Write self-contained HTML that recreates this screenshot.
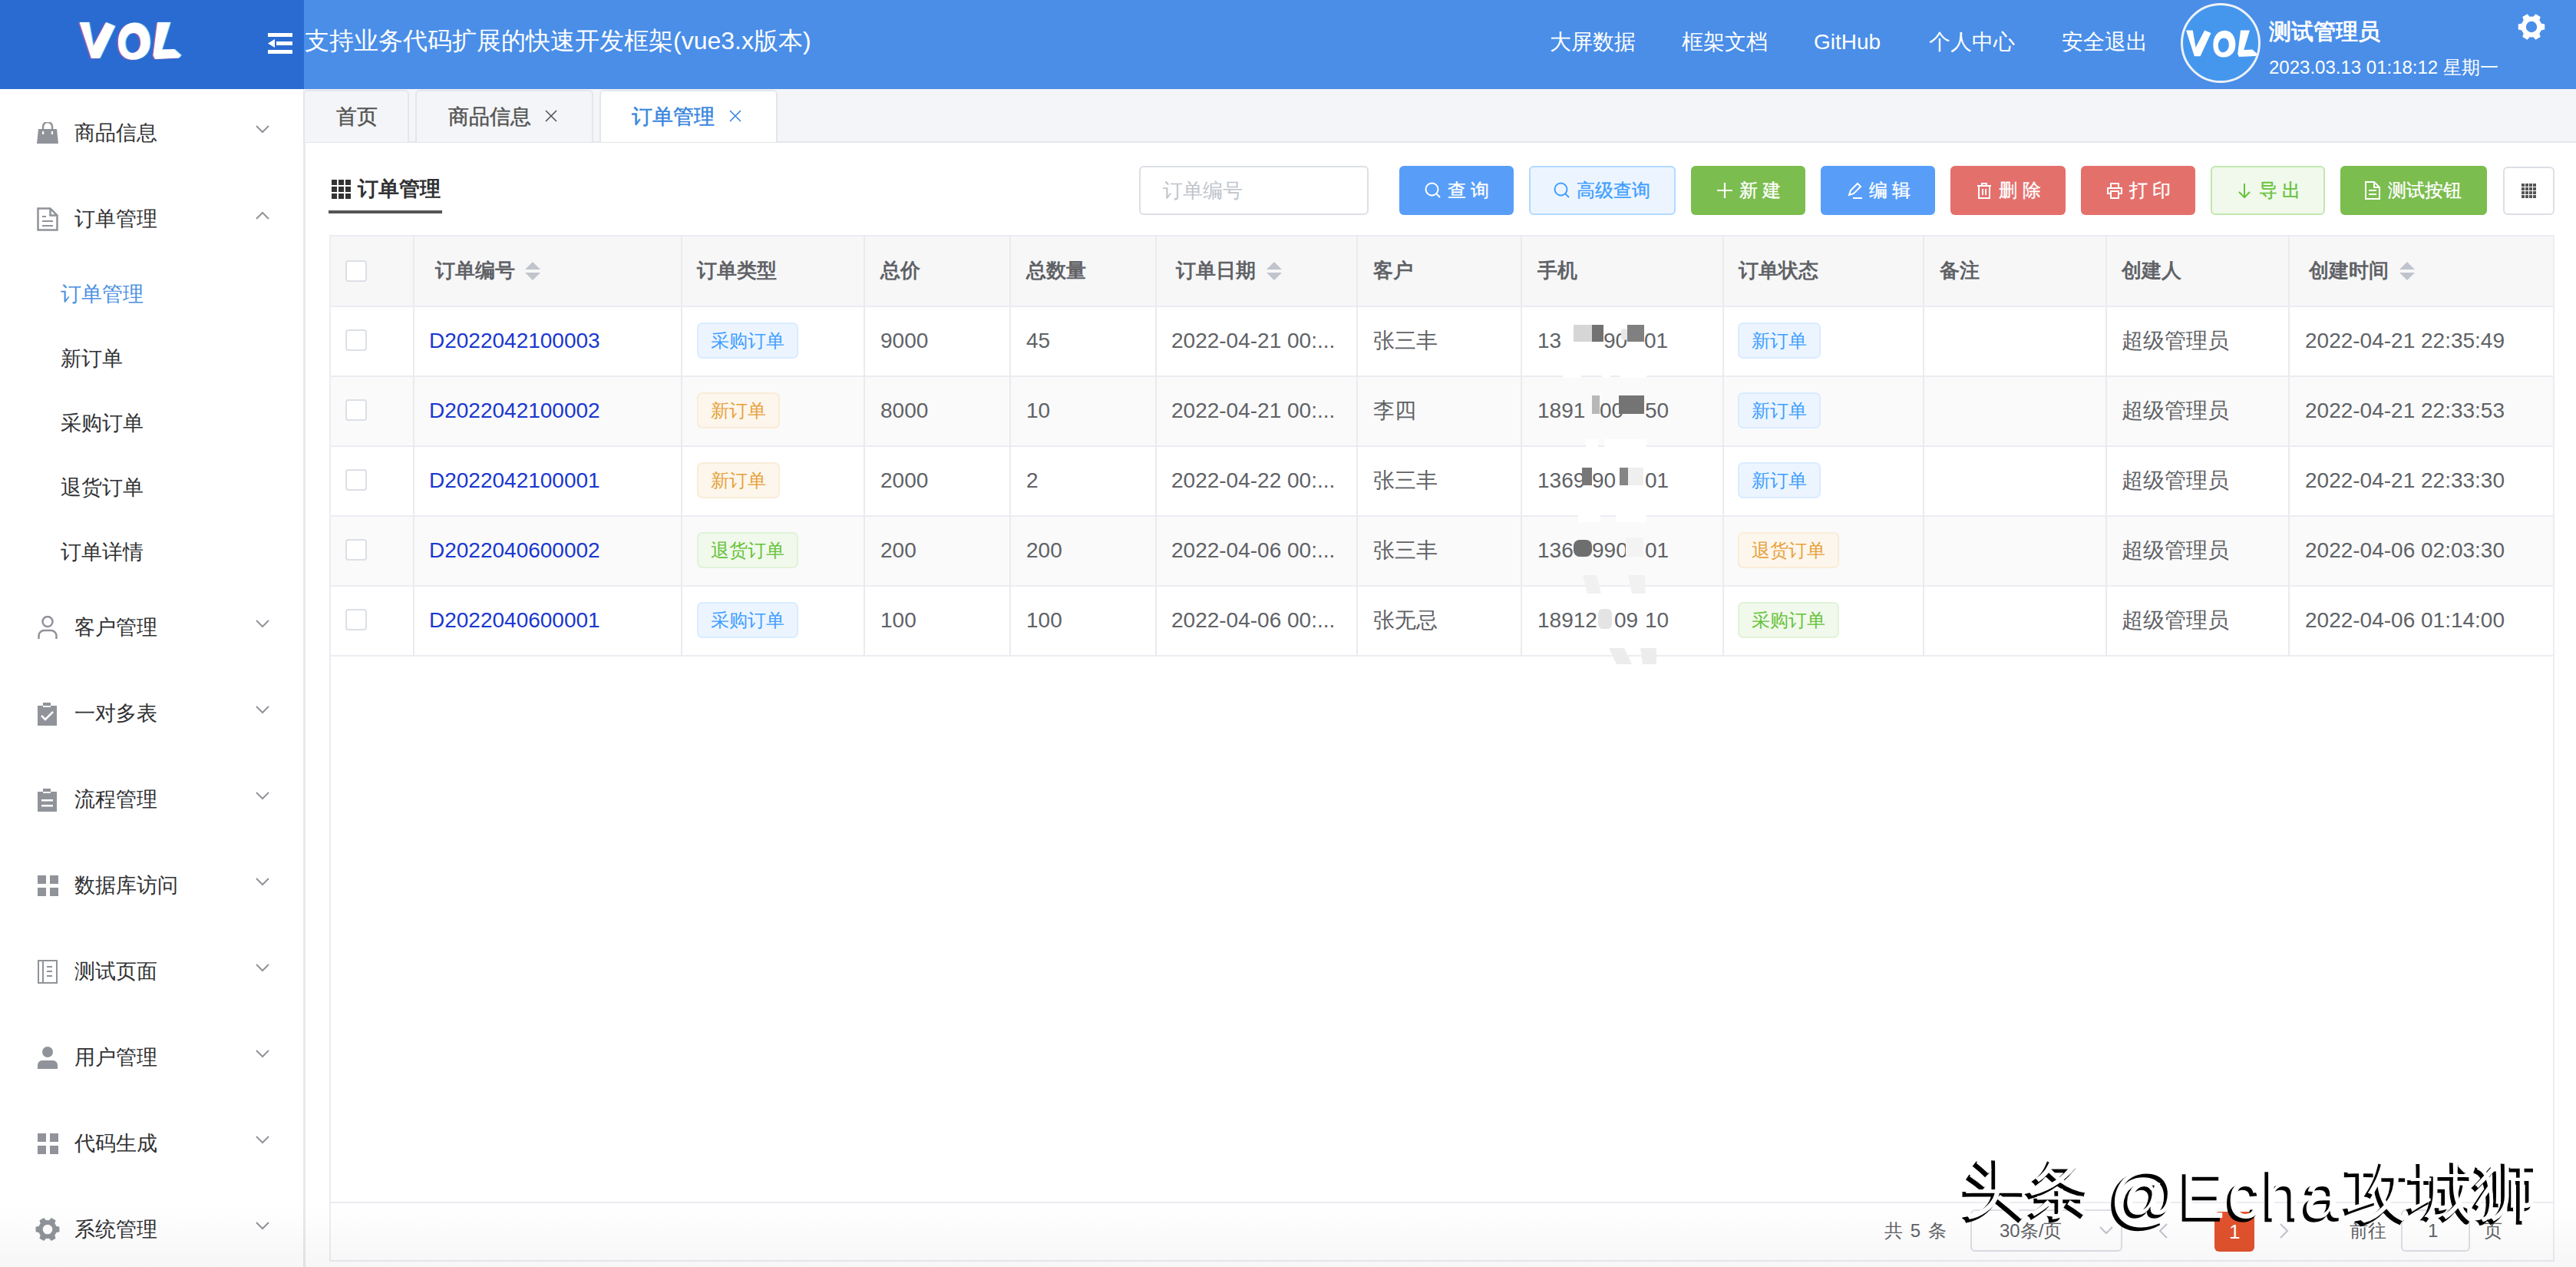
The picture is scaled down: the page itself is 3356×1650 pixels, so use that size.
<!DOCTYPE html><html><head><meta charset="utf-8"><style>
*{box-sizing:border-box;margin:0;padding:0}
html,body{width:3356px;height:1650px;overflow:hidden;background:#fff;font-family:"Liberation Sans",sans-serif;}
.a{position:absolute}
.t{position:absolute;white-space:nowrap;line-height:1}
#logo{left:0;top:0;width:396px;height:116px;background:#2a6bd1}
#hdr{left:396px;top:0;width:2960px;height:116px;background:#4a8ee8}
.nav{color:#fff;font-size:28px}
#side{left:0;top:116px;width:398px;height:1534px;background:#fff;border-right:3px solid #e9e9ea}
.mi{font-size:27px;color:#303133}
.chev{position:absolute;left:333px;width:18px;height:11px}
#tabs{left:396px;top:116px;width:2960px;height:70px;background:#f4f5f8;border-bottom:2px solid #e4e6eb}
.tab{position:absolute;top:117px;height:68px;background:#f4f5f8;border:2px solid #e4e6eb;border-bottom:none;border-radius:6px 6px 0 0}
.tabt{font-size:27px;color:#555;-webkit-text-stroke:0.5px #555}
.btn{position:absolute;top:216px;height:64px;border-radius:6px;color:#fff;font-size:24px}
.btn .t{top:20px}
.col{position:absolute;top:307px;width:2px;height:1258px;background:#ebedf2}
.th{font-size:26px;color:#606266;font-weight:bold}
.td{font-size:28px;color:#606266}
.cb{position:absolute;left:450px;width:28px;height:28px;border:2px solid #dcdfe6;border-radius:4px;background:#fff}
.tag{position:absolute;height:47px;border:2px solid;border-radius:7px;font-size:24px;line-height:43px;padding:0 16px;white-space:nowrap}
.tb{background:#ecf5ff;border-color:#d9ecff;color:#409eff}
.to{background:#fdf6ec;border-color:#faecd8;color:#e6a23c}
.tg{background:#f0f9eb;border-color:#e1f3d8;color:#67c23a}
.link{color:#1a37d0}
</style></head><body>
<div id="logo" class="a"></div>
<div id="hdr" class="a"></div>
<svg class="a" style="left:0px;top:0px" width="396" height="116" viewBox="0 0 396 116"><g transform="translate(-1.5,0.5)"><path fill="rgba(255,90,140,.55)" d="M103.5 29L116 29L121.5 60L138 29L150 34L130 76L119 76Z"/><path fill="rgba(255,90,140,.55)" fill-rule="evenodd" d="M175 29.5C188 29 196 41 195.5 56C195 70 186 78 173 77.8C160 77.5 153.5 68 154 54C154.5 40 162 30 175 29.5ZM174 43C167 43 163 50 163.3 57C163.5 64 167 69.5 173 69C179.5 68.5 183.5 62 183.2 55C183 48 180 43 174 43Z"/><path fill="rgba(255,90,140,.55)" d="M205 29L222 29L211 64.5L227 64L236 72L233 75.5L202 77L199.5 72Z"/></g><g transform="translate(1.2,-0.3)"><path fill="rgba(160,255,255,.5)" d="M103.5 29L116 29L121.5 60L138 29L150 34L130 76L119 76Z"/><path fill="rgba(160,255,255,.5)" fill-rule="evenodd" d="M175 29.5C188 29 196 41 195.5 56C195 70 186 78 173 77.8C160 77.5 153.5 68 154 54C154.5 40 162 30 175 29.5ZM174 43C167 43 163 50 163.3 57C163.5 64 167 69.5 173 69C179.5 68.5 183.5 62 183.2 55C183 48 180 43 174 43Z"/><path fill="rgba(160,255,255,.5)" d="M205 29L222 29L211 64.5L227 64L236 72L233 75.5L202 77L199.5 72Z"/></g><path fill="#fff" d="M103.5 29L116 29L121.5 60L138 29L150 34L130 76L119 76Z"/><path fill="#fff" fill-rule="evenodd" d="M175 29.5C188 29 196 41 195.5 56C195 70 186 78 173 77.8C160 77.5 153.5 68 154 54C154.5 40 162 30 175 29.5ZM174 43C167 43 163 50 163.3 57C163.5 64 167 69.5 173 69C179.5 68.5 183.5 62 183.2 55C183 48 180 43 174 43Z"/><path fill="#fff" d="M205 29L222 29L211 64.5L227 64L236 72L233 75.5L202 77L199.5 72Z"/></svg>
<svg class="a" style="left:349px;top:43px" width="32" height="27" viewBox="0 0 32 27"><rect x="0" y="0" width="32" height="5" fill="#fff"/><rect x="11" y="11" width="21" height="5" fill="#fff"/><polygon points="0,13.5 9,8 9,19" fill="#fff"/><rect x="0" y="22" width="32" height="5" fill="#fff"/></svg>
<div class="t " style="left:397px;top:37px;font-size:32px;color:#fff">支持业务代码扩展的快速开发框架(vue3.x版本)</div>
<div class="t nav" style="left:2019px;top:41px;">大屏数据</div>
<div class="t nav" style="left:2191px;top:41px;">框架文档</div>
<div class="t nav" style="left:2363px;top:41px;">GitHub</div>
<div class="t nav" style="left:2513px;top:41px;">个人中心</div>
<div class="t nav" style="left:2686px;top:41px;">安全退出</div>
<div class="a" style="left:2841px;top:4px;width:104px;height:104px;border-radius:50%;border:3px solid #eef2f8;background:#4597ee"></div>
<svg class="a" style="left:2830px;top:0px" width="130" height="116" viewBox="0 0 130 116"><g transform="translate(-54.45,18.52) scale(0.70,0.72)"><path fill="#fff" d="M103.5 29L116 29L121.5 60L138 29L150 34L130 76L119 76Z"/><path fill="#fff" fill-rule="evenodd" d="M175 29.5C188 29 196 41 195.5 56C195 70 186 78 173 77.8C160 77.5 153.5 68 154 54C154.5 40 162 30 175 29.5ZM174 43C167 43 163 50 163.3 57C163.5 64 167 69.5 173 69C179.5 68.5 183.5 62 183.2 55C183 48 180 43 174 43Z"/><path fill="#fff" d="M205 29L222 29L211 64.5L227 64L236 72L233 75.5L202 77L199.5 72Z"/></g></svg>
<div class="t " style="left:2956px;top:27px;font-size:29px;font-weight:bold;color:#fff">测试管理员</div>
<div class="t " style="left:2956px;top:76px;font-size:24px;color:#fff">2023.03.13 01:18:12 星期一</div>
<svg class="a" style="left:3280px;top:17px" width="36" height="36" viewBox="0 0 36 36"><path fill="#fff" fill-rule="evenodd" d="M30.59 13.40L35.23 14.40L35.23 21.60L30.59 22.60L30.30 23.32L29.97 24.02L29.60 24.70L29.20 25.36L28.76 25.99L28.28 26.60L29.73 31.12L23.50 34.72L20.31 31.20L19.54 31.31L18.77 31.38L18.00 31.40L17.23 31.38L16.46 31.31L15.69 31.20L12.50 34.72L6.27 31.12L7.72 26.60L7.24 25.99L6.80 25.36L6.40 24.70L6.03 24.02L5.70 23.32L5.41 22.60L0.77 21.60L0.77 14.40L5.41 13.40L5.70 12.68L6.03 11.98L6.40 11.30L6.80 10.64L7.24 10.01L7.72 9.40L6.27 4.88L12.50 1.28L15.69 4.80L16.46 4.69L17.23 4.62L18.00 4.60L18.77 4.62L19.54 4.69L20.31 4.80L23.50 1.28L29.73 4.88L28.28 9.40L28.76 10.01L29.20 10.64L29.60 11.30L29.97 11.98L30.30 12.68ZM25.20 18.00A7.2 7.2 0 1 0 10.80 18.00A7.2 7.2 0 1 0 25.20 18.00Z"/></svg>
<div id="side" class="a"></div>
<svg class="a" style="left:48px;top:159px" width="28" height="28" viewBox="0 0 28 28"><path d="M8 9V6a6 6 0 0 1 12 0v3" fill="none" stroke="#909399" stroke-width="2.5"/><path d="M2 9h24l2 19H0z" fill="#909399"/><rect x="7" y="12" width="2.2" height="4" fill="#fff"/><rect x="18.8" y="12" width="2.2" height="4" fill="#fff"/></svg>
<div class="t mi" style="left:97px;top:160px;">商品信息</div>
<svg class="a" style="left:333px;top:163px" width="18" height="11" viewBox="0 0 18 11"><polyline points="1,1 9,9 17,1" fill="none" stroke="#909399" stroke-width="2"/></svg>
<svg class="a" style="left:48px;top:270px" width="28" height="31" viewBox="0 0 28 31"><path d="M1.5 1.5h16l9 9v19h-25z" fill="none" stroke="#909399" stroke-width="2.5"/><path d="M17.5 1.5v9h9" fill="none" stroke="#909399" stroke-width="2.5"/><rect x="7" y="11" width="5" height="2" fill="#909399"/><rect x="7" y="17" width="14" height="2" fill="#909399"/><rect x="7" y="23" width="14" height="2" fill="#909399"/></svg>
<div class="t mi" style="left:97px;top:272px;">订单管理</div>
<svg class="a" style="left:333px;top:275px" width="18" height="11" viewBox="0 0 18 11"><polyline points="1,10 9,2 17,10" fill="none" stroke="#909399" stroke-width="2"/></svg>
<svg class="a" style="left:49px;top:802px" width="27" height="31" viewBox="0 0 27 31"><circle cx="13" cy="7.5" r="6.5" fill="none" stroke="#909399" stroke-width="2.5"/><path d="M1.5 30v-4a7 7 0 0 1 7-7h9a7 7 0 0 1 7 7v4" fill="none" stroke="#909399" stroke-width="2.5"/></svg>
<div class="t mi" style="left:97px;top:804px;">客户管理</div>
<svg class="a" style="left:333px;top:807px" width="18" height="11" viewBox="0 0 18 11"><polyline points="1,1 9,9 17,1" fill="none" stroke="#909399" stroke-width="2"/></svg>
<svg class="a" style="left:49px;top:915px" width="25" height="30" viewBox="0 0 25 30"><path d="M0 4h7v-4h10v4h8v26H0z" fill="#909399"/><rect x="7" y="4" width="10" height="2" fill="#fff"/><polyline points="5,17 10,22 20,12" fill="none" stroke="#fff" stroke-width="2.5"/></svg>
<div class="t mi" style="left:97px;top:916px;">一对多表</div>
<svg class="a" style="left:333px;top:919px" width="18" height="11" viewBox="0 0 18 11"><polyline points="1,1 9,9 17,1" fill="none" stroke="#909399" stroke-width="2"/></svg>
<svg class="a" style="left:49px;top:1027px" width="25" height="30" viewBox="0 0 25 30"><path d="M0 4h7v-4h10v4h8v26H0z" fill="#909399"/><rect x="7" y="4" width="10" height="2" fill="#fff"/><rect x="5" y="14" width="15" height="2.5" fill="#fff"/><rect x="5" y="21" width="15" height="2.5" fill="#fff"/></svg>
<div class="t mi" style="left:97px;top:1028px;">流程管理</div>
<svg class="a" style="left:333px;top:1031px" width="18" height="11" viewBox="0 0 18 11"><polyline points="1,1 9,9 17,1" fill="none" stroke="#909399" stroke-width="2"/></svg>
<svg class="a" style="left:49px;top:1140px" width="27" height="27" viewBox="0 0 27 27"><rect x="0" y="0" width="11" height="11" fill="#909399"/><rect x="16" y="0" width="11" height="11" fill="#909399"/><rect x="0" y="16" width="11" height="11" fill="#909399"/><rect x="16" y="16" width="11" height="11" fill="#909399"/></svg>
<div class="t mi" style="left:97px;top:1140px;">数据库访问</div>
<svg class="a" style="left:333px;top:1143px" width="18" height="11" viewBox="0 0 18 11"><polyline points="1,1 9,9 17,1" fill="none" stroke="#909399" stroke-width="2"/></svg>
<svg class="a" style="left:49px;top:1250px" width="26" height="31" viewBox="0 0 26 31"><rect x="1" y="1" width="24" height="29" fill="none" stroke="#909399" stroke-width="2"/><rect x="6" y="1" width="2" height="29" fill="#909399"/><rect x="12" y="8" width="7" height="2" fill="#909399"/><rect x="12" y="14" width="7" height="2" fill="#909399"/><rect x="12" y="20" width="7" height="2" fill="#909399"/></svg>
<div class="t mi" style="left:97px;top:1252px;">测试页面</div>
<svg class="a" style="left:333px;top:1255px" width="18" height="11" viewBox="0 0 18 11"><polyline points="1,1 9,9 17,1" fill="none" stroke="#909399" stroke-width="2"/></svg>
<svg class="a" style="left:49px;top:1363px" width="26" height="29" viewBox="0 0 26 29"><circle cx="13" cy="7" r="7" fill="#909399"/><path d="M0 29v-5a6 6 0 0 1 6-6h14a6 6 0 0 1 6 6v5z" fill="#909399"/></svg>
<div class="t mi" style="left:97px;top:1364px;">用户管理</div>
<svg class="a" style="left:333px;top:1367px" width="18" height="11" viewBox="0 0 18 11"><polyline points="1,1 9,9 17,1" fill="none" stroke="#909399" stroke-width="2"/></svg>
<svg class="a" style="left:49px;top:1476px" width="27" height="27" viewBox="0 0 27 27"><rect x="0" y="0" width="11" height="11" fill="#909399"/><rect x="16" y="0" width="11" height="11" fill="#909399"/><rect x="0" y="16" width="11" height="11" fill="#909399"/><rect x="16" y="16" width="11" height="11" fill="#909399"/></svg>
<div class="t mi" style="left:97px;top:1476px;">代码生成</div>
<svg class="a" style="left:333px;top:1479px" width="18" height="11" viewBox="0 0 18 11"><polyline points="1,1 9,9 17,1" fill="none" stroke="#909399" stroke-width="2"/></svg>
<svg class="a" style="left:46px;top:1586px" width="32" height="30" viewBox="0 0 32 30"><path fill="#909399" fill-rule="evenodd" d="M27.20 10.70L31.45 11.70L31.45 18.30L27.20 19.30L26.96 19.88L26.69 20.45L26.39 21.00L26.06 21.54L25.71 22.05L25.33 22.55L26.58 26.73L20.87 30.03L17.88 26.85L17.25 26.93L16.63 26.98L16.00 27.00L15.37 26.98L14.75 26.93L14.12 26.85L11.13 30.03L5.42 26.73L6.67 22.55L6.29 22.05L5.94 21.54L5.61 21.00L5.31 20.45L5.04 19.88L4.80 19.30L0.55 18.30L0.55 11.70L4.80 10.70L5.04 10.12L5.31 9.55L5.61 9.00L5.94 8.46L6.29 7.95L6.67 7.45L5.42 3.27L11.13 -0.03L14.12 3.15L14.75 3.07L15.37 3.02L16.00 3.00L16.63 3.02L17.25 3.07L17.88 3.15L20.87 -0.03L26.58 3.27L25.33 7.45L25.71 7.95L26.06 8.46L26.39 9.00L26.69 9.55L26.96 10.12ZM22.30 15.00A6.3 6.3 0 1 0 9.70 15.00A6.3 6.3 0 1 0 22.30 15.00Z"/></svg>
<div class="t mi" style="left:97px;top:1588px;">系统管理</div>
<svg class="a" style="left:333px;top:1591px" width="18" height="11" viewBox="0 0 18 11"><polyline points="1,1 9,9 17,1" fill="none" stroke="#909399" stroke-width="2"/></svg>
<div class="t mi" style="left:79px;top:370px;color:#4a90e2">订单管理</div>
<div class="t mi" style="left:79px;top:454px;">新订单</div>
<div class="t mi" style="left:79px;top:538px;">采购订单</div>
<div class="t mi" style="left:79px;top:622px;">退货订单</div>
<div class="t mi" style="left:79px;top:706px;">订单详情</div>
<div id="tabs" class="a"></div>
<div class="tab" style="left:395px;width:138px"></div>
<div class="t tabt" style="left:438px;top:139px;">首页</div>
<div class="tab" style="left:541px;width:232px"></div>
<div class="t tabt" style="left:584px;top:139px;">商品信息</div>
<svg class="a" style="left:710px;top:143px" width="16" height="16" viewBox="0 0 16 16"><path d="M1 1L15 15M15 1L1 15" stroke="#555" stroke-width="1.6"/></svg>
<div class="tab" style="left:781px;width:232px;background:#fff"></div>
<div class="t tabt" style="left:823px;top:139px;color:#3a86de;-webkit-text-stroke:0.5px #3a86de">订单管理</div>
<svg class="a" style="left:950px;top:143px" width="16" height="16" viewBox="0 0 16 16"><path d="M1 1L15 15M15 1L1 15" stroke="#3a86de" stroke-width="1.6"/></svg>
<svg class="a" style="left:432px;top:234px" width="25" height="25" viewBox="0 0 25 25"><rect x="0" y="0" width="7" height="7" fill="#333"/><rect x="9" y="0" width="7" height="7" fill="#333"/><rect x="18" y="0" width="7" height="7" fill="#333"/><rect x="0" y="9" width="7" height="7" fill="#333"/><rect x="9" y="9" width="7" height="7" fill="#333"/><rect x="18" y="9" width="7" height="7" fill="#333"/><rect x="0" y="18" width="7" height="7" fill="#333"/><rect x="9" y="18" width="7" height="7" fill="#333"/><rect x="18" y="18" width="7" height="7" fill="#333"/></svg>
<div class="t " style="left:466px;top:233px;font-size:27px;font-weight:bold;color:#303133">订单管理</div>
<div class="a" style="left:428px;top:274px;width:148px;height:4px;background:#555"></div>
<div class="a" style="left:1484px;top:216px;width:299px;height:64px;border:2px solid #dcdfe6;border-radius:6px;background:#fff"></div>
<div class="t " style="left:1515px;top:235px;font-size:26px;color:#c0c4cc">订单编号</div>
<div class="btn" style="left:1823px;width:149px;background:#589ef8;color:#fff;"></div>
<svg class="a" style="left:1855.5px;top:237px" width="22" height="22" viewBox="0 0 22 22"><circle cx="9.5" cy="9.5" r="8" fill="none" stroke="#fff" stroke-width="2"/><path d="M15 15l5 5" stroke="#fff" stroke-width="2"/></svg>
<div class="t " style="left:1885.5px;top:236px;font-size:24px;color:#fff;-webkit-text-stroke:0.35px #fff">查 询</div>
<div class="btn" style="left:1992px;width:191px;background:#ecf5ff;color:#409eff;border:2px solid #b3d8ff;"></div>
<svg class="a" style="left:2023.5px;top:237px" width="22" height="22" viewBox="0 0 22 22"><circle cx="9.5" cy="9.5" r="8" fill="none" stroke="#409eff" stroke-width="2"/><path d="M15 15l5 5" stroke="#409eff" stroke-width="2"/></svg>
<div class="t " style="left:2053.5px;top:236px;font-size:24px;color:#409eff;-webkit-text-stroke:0.35px #409eff">高级查询</div>
<div class="btn" style="left:2203px;width:149px;background:#7bbd4f;color:#fff;"></div>
<svg class="a" style="left:2235.5px;top:237px" width="22" height="22" viewBox="0 0 22 22"><path d="M11 1v20M1 11h20" stroke="#fff" stroke-width="2.2"/></svg>
<div class="t " style="left:2265.5px;top:236px;font-size:24px;color:#fff;-webkit-text-stroke:0.35px #fff">新 建</div>
<div class="btn" style="left:2372px;width:149px;background:#589ef8;color:#fff;"></div>
<svg class="a" style="left:2404.5px;top:237px" width="22" height="22" viewBox="0 0 22 22"><path d="M4 17l2-6 9-9 4 4-9 9z" fill="none" stroke="#fff" stroke-width="2"/><path d="M9 21h12" stroke="#fff" stroke-width="2"/></svg>
<div class="t " style="left:2434.5px;top:236px;font-size:24px;color:#fff;-webkit-text-stroke:0.35px #fff">编 辑</div>
<div class="btn" style="left:2541px;width:150px;background:#e4706c;color:#fff;"></div>
<svg class="a" style="left:2574.0px;top:237px" width="22" height="22" viewBox="0 0 22 22"><path d="M2 5h18M8 5v-3h6v3M4 5v16h14v-16M9 9v8M13 9v8" fill="none" stroke="#fff" stroke-width="2"/></svg>
<div class="t " style="left:2604.0px;top:236px;font-size:24px;color:#fff;-webkit-text-stroke:0.35px #fff">删 除</div>
<div class="btn" style="left:2711px;width:149px;background:#e4706c;color:#fff;"></div>
<svg class="a" style="left:2743.5px;top:237px" width="22" height="22" viewBox="0 0 22 22"><path d="M6 8v-6h10v6M6 15h-4v-7h18v7h-4M6 12h10v9h-10z" fill="none" stroke="#fff" stroke-width="2"/></svg>
<div class="t " style="left:2773.5px;top:236px;font-size:24px;color:#fff;-webkit-text-stroke:0.35px #fff">打 印</div>
<div class="btn" style="left:2880px;width:149px;background:#f0f9eb;color:#67c23a;border:2px solid #c2e7b0;"></div>
<svg class="a" style="left:2912.5px;top:237px" width="22" height="22" viewBox="0 0 22 22"><path d="M11 2v18M4 13l7 7 7-7" fill="none" stroke="#67c23a" stroke-width="2"/></svg>
<div class="t " style="left:2942.5px;top:236px;font-size:24px;color:#67c23a;-webkit-text-stroke:0.35px #67c23a">导 出</div>
<div class="btn" style="left:3049px;width:191px;background:#7bbd4f;color:#fff;"></div>
<svg class="a" style="left:3080.5px;top:236px" width="20" height="24" viewBox="0 0 20 24"><path d="M1 1h11l7 7v15h-18z" fill="none" stroke="#fff" stroke-width="2"/><path d="M12 1v7h7M5 12h10M5 17h10" fill="none" stroke="#fff" stroke-width="2"/></svg>
<div class="t " style="left:3110.5px;top:236px;font-size:24px;color:#fff;-webkit-text-stroke:0.35px #fff">测试按钮</div>
<div class="a" style="left:3261px;top:217px;width:67px;height:63px;border:2px solid #dcdfe6;border-radius:6px;background:#fff"></div>
<svg class="a" style="left:3285px;top:239px" width="19" height="19" viewBox="0 0 19 19"><rect x="0" y="0" width="4" height="4" fill="#555"/><rect x="5" y="0" width="4" height="4" fill="#555"/><rect x="10" y="0" width="4" height="4" fill="#555"/><rect x="15" y="0" width="4" height="4" fill="#555"/><rect x="0" y="5" width="4" height="4" fill="#555"/><rect x="5" y="5" width="4" height="4" fill="#555"/><rect x="10" y="5" width="4" height="4" fill="#555"/><rect x="15" y="5" width="4" height="4" fill="#555"/><rect x="0" y="10" width="4" height="4" fill="#555"/><rect x="5" y="10" width="4" height="4" fill="#555"/><rect x="10" y="10" width="4" height="4" fill="#555"/><rect x="15" y="10" width="4" height="4" fill="#555"/><rect x="0" y="15" width="4" height="4" fill="#555"/><rect x="5" y="15" width="4" height="4" fill="#555"/><rect x="10" y="15" width="4" height="4" fill="#555"/><rect x="15" y="15" width="4" height="4" fill="#555"/></svg>
<div class="a" style="left:429px;top:306px;width:2899px;height:92px;background:#f7f7f8"></div>
<div class="a" style="left:429px;top:489px;width:2899px;height:91px;background:#fafafa"></div>
<div class="a" style="left:429px;top:671px;width:2899px;height:91px;background:#fafafa"></div>
<div class="a" style="left:429px;top:306px;width:2899px;height:1337px;border:2px solid #ebedf2"></div>
<div class="a" style="left:429px;top:306px;width:2899px;height:2px;background:#ebedf2"></div>
<div class="a" style="left:429px;top:398px;width:2899px;height:2px;background:#ebedf2"></div>
<div class="a" style="left:429px;top:489px;width:2899px;height:2px;background:#ebedf2"></div>
<div class="a" style="left:429px;top:580px;width:2899px;height:2px;background:#ebedf2"></div>
<div class="a" style="left:429px;top:671px;width:2899px;height:2px;background:#ebedf2"></div>
<div class="a" style="left:429px;top:762px;width:2899px;height:2px;background:#ebedf2"></div>
<div class="a" style="left:429px;top:853px;width:2899px;height:2px;background:#ebedf2"></div>
<div class="a" style="left:429px;top:1565px;width:2899px;height:2px;background:#ebedf2"></div>
<div class="a" style="left:538px;top:306px;width:2px;height:549px;background:#ebebee"></div>
<div class="a" style="left:887px;top:306px;width:2px;height:549px;background:#ebebee"></div>
<div class="a" style="left:1125px;top:306px;width:2px;height:549px;background:#ebebee"></div>
<div class="a" style="left:1315px;top:306px;width:2px;height:549px;background:#ebebee"></div>
<div class="a" style="left:1505px;top:306px;width:2px;height:549px;background:#ebebee"></div>
<div class="a" style="left:1767px;top:306px;width:2px;height:549px;background:#ebebee"></div>
<div class="a" style="left:1981px;top:306px;width:2px;height:549px;background:#ebebee"></div>
<div class="a" style="left:2244px;top:306px;width:2px;height:549px;background:#ebebee"></div>
<div class="a" style="left:2505px;top:306px;width:2px;height:549px;background:#ebebee"></div>
<div class="a" style="left:2743px;top:306px;width:2px;height:549px;background:#ebebee"></div>
<div class="a" style="left:2981px;top:306px;width:2px;height:549px;background:#ebebee"></div>
<div class="cb" style="top:339px"></div>
<div class="t th" style="left:567px;top:339px;">订单编号</div>
<svg class="a" style="left:684px;top:341px" width="20" height="24" viewBox="0 0 20 24"><polygon points="10,0 20,10 0,10" fill="#c0c4cc"/><polygon points="0,14 20,14 10,24" fill="#c0c4cc"/></svg>
<div class="t th" style="left:908px;top:339px;">订单类型</div>
<div class="t th" style="left:1147px;top:339px;">总价</div>
<div class="t th" style="left:1337px;top:339px;">总数量</div>
<div class="t th" style="left:1532px;top:339px;">订单日期</div>
<svg class="a" style="left:1650px;top:341px" width="20" height="24" viewBox="0 0 20 24"><polygon points="10,0 20,10 0,10" fill="#c0c4cc"/><polygon points="0,14 20,14 10,24" fill="#c0c4cc"/></svg>
<div class="t th" style="left:1789px;top:339px;">客户</div>
<div class="t th" style="left:2003px;top:339px;">手机</div>
<div class="t th" style="left:2265px;top:339px;">订单状态</div>
<div class="t th" style="left:2527px;top:339px;">备注</div>
<div class="t th" style="left:2764px;top:339px;">创建人</div>
<div class="t th" style="left:3008px;top:339px;">创建时间</div>
<svg class="a" style="left:3126px;top:341px" width="20" height="24" viewBox="0 0 20 24"><polygon points="10,0 20,10 0,10" fill="#c0c4cc"/><polygon points="0,14 20,14 10,24" fill="#c0c4cc"/></svg>
<div class="cb" style="top:429px"></div>
<div class="t td link" style="left:559px;top:430px;">D2022042100003</div>
<div class="tag tb" style="left:908px;top:420px">采购订单</div>
<div class="t td" style="left:1147px;top:430px;">9000</div>
<div class="t td" style="left:1337px;top:430px;">45</div>
<div class="t td" style="left:1526px;top:430px;">2022-04-21 00:...</div>
<div class="t td" style="left:1789px;top:430px;">张三丰</div>
<div class="t td" style="left:2003px;top:430px;">13</div>
<div class="a" style="left:2050px;top:423px;width:24px;height:22px;background:#d6d6d6;border-radius:0px"></div>
<div class="a" style="left:2074px;top:423px;width:15px;height:22px;background:#727272;border-radius:0px"></div>
<div class="t td" style="left:2089px;top:430px;">90</div>
<div class="a" style="left:2112px;top:428px;width:8px;height:15px;background:#e8e8e8;border-radius:4px"></div>
<div class="a" style="left:2120px;top:423px;width:22px;height:22px;background:#808080;border-radius:0px"></div>
<div class="t td" style="left:2142px;top:430px;">01</div>
<div class="tag tb" style="left:2264px;top:420px">新订单</div>
<div class="t td" style="left:2764px;top:430px;">超级管理员</div>
<div class="t td" style="left:3003px;top:430px;">2022-04-21 22:35:49</div>
<div class="cb" style="top:520px"></div>
<div class="t td link" style="left:559px;top:521px;">D2022042100002</div>
<div class="tag to" style="left:908px;top:511px">新订单</div>
<div class="t td" style="left:1147px;top:521px;">8000</div>
<div class="t td" style="left:1337px;top:521px;">10</div>
<div class="t td" style="left:1526px;top:521px;">2022-04-21 00:...</div>
<div class="t td" style="left:1789px;top:521px;">李四</div>
<div class="t td" style="left:2003px;top:521px;">1891</div>
<div class="a" style="left:2074px;top:515px;width:10px;height:24px;background:#b8b8b8;border-radius:0px"></div>
<div class="t td" style="left:2084px;top:521px;">00</div>
<div class="a" style="left:2109px;top:515px;width:33px;height:24px;background:#747474;border-radius:0px"></div>
<div class="t td" style="left:2143px;top:521px;">50</div>
<div class="tag tb" style="left:2264px;top:511px">新订单</div>
<div class="t td" style="left:2764px;top:521px;">超级管理员</div>
<div class="t td" style="left:3003px;top:521px;">2022-04-21 22:33:53</div>
<div class="cb" style="top:611px"></div>
<div class="t td link" style="left:559px;top:612px;">D2022042100001</div>
<div class="tag to" style="left:908px;top:602px">新订单</div>
<div class="t td" style="left:1147px;top:612px;">2000</div>
<div class="t td" style="left:1337px;top:612px;">2</div>
<div class="t td" style="left:1526px;top:612px;">2022-04-22 00:...</div>
<div class="t td" style="left:1789px;top:612px;">张三丰</div>
<div class="t td" style="left:2003px;top:612px;">1369</div>
<div class="a" style="left:2061px;top:609px;width:13px;height:23px;background:#777777;border-radius:0px"></div>
<div class="t td" style="left:2074px;top:612px;">90</div>
<div class="a" style="left:2110px;top:609px;width:11px;height:23px;background:#858585;border-radius:0px"></div>
<div class="a" style="left:2121px;top:609px;width:20px;height:23px;background:#efefef;border-radius:0px"></div>
<div class="t td" style="left:2143px;top:612px;">01</div>
<div class="tag tb" style="left:2264px;top:602px">新订单</div>
<div class="t td" style="left:2764px;top:612px;">超级管理员</div>
<div class="t td" style="left:3003px;top:612px;">2022-04-21 22:33:30</div>
<div class="cb" style="top:702px"></div>
<div class="t td link" style="left:559px;top:703px;">D2022040600002</div>
<div class="tag tg" style="left:908px;top:693px">退货订单</div>
<div class="t td" style="left:1147px;top:703px;">200</div>
<div class="t td" style="left:1337px;top:703px;">200</div>
<div class="t td" style="left:1526px;top:703px;">2022-04-06 00:...</div>
<div class="t td" style="left:1789px;top:703px;">张三丰</div>
<div class="t td" style="left:2003px;top:703px;">136</div>
<div class="a" style="left:2050px;top:703px;width:24px;height:22px;background:#6e6e6e;border-radius:8px"></div>
<div class="t td" style="left:2074px;top:703px;">990</div>
<div class="a" style="left:2118px;top:700px;width:23px;height:25px;background:#f3f3f3;border-radius:0px"></div>
<div class="t td" style="left:2143px;top:703px;">01</div>
<div class="tag to" style="left:2264px;top:693px">退货订单</div>
<div class="t td" style="left:2764px;top:703px;">超级管理员</div>
<div class="t td" style="left:3003px;top:703px;">2022-04-06 02:03:30</div>
<div class="cb" style="top:793px"></div>
<div class="t td link" style="left:559px;top:794px;">D2022040600001</div>
<div class="tag tb" style="left:908px;top:784px">采购订单</div>
<div class="t td" style="left:1147px;top:794px;">100</div>
<div class="t td" style="left:1337px;top:794px;">100</div>
<div class="t td" style="left:1526px;top:794px;">2022-04-06 00:...</div>
<div class="t td" style="left:1789px;top:794px;">张无忌</div>
<div class="t td" style="left:2003px;top:794px;">18912</div>
<div class="a" style="left:2082px;top:793px;width:18px;height:26px;background:#e4e4e4;border-radius:6px"></div>
<div class="t td" style="left:2103px;top:794px;">09</div>
<div class="t td" style="left:2143px;top:794px;">10</div>
<div class="tag tg" style="left:2264px;top:784px">采购订单</div>
<div class="t td" style="left:2764px;top:794px;">超级管理员</div>
<div class="t td" style="left:3003px;top:794px;">2022-04-06 01:14:00</div>
<div class="a" style="left:2036px;top:480px;width:24px;height:12px;background:#fff"></div>
<div class="a" style="left:2087px;top:480px;width:11px;height:12px;background:#fff"></div>
<div class="a" style="left:2110px;top:480px;width:35px;height:12px;background:#fff"></div>
<div class="a" style="left:2066px;top:572px;width:16px;height:13px;background:#fff"></div>
<div class="a" style="left:2090px;top:572px;width:55px;height:13px;background:#fff"></div>
<div class="a" style="left:2056px;top:660px;width:29px;height:20px;background:#fff"></div>
<div class="a" style="left:2105px;top:660px;width:40px;height:20px;background:#fff"></div>
<svg class="a" style="left:2040px;top:740px" width="140" height="130" viewBox="0 0 140 130"><polygon points="22,9 40,9 46,33 28,33" fill="#f1f1f1"/><polygon points="81,9 103,9 104,33 86,33" fill="#f1f1f1"/><polygon points="56,104 76,104 86,125 66,125" fill="#ececec"/><polygon points="97,104 118,104 118,125 100,125" fill="#ececec"/></svg>
<div class="t " style="left:2455px;top:1591px;font-size:24px;color:#606266;word-spacing:3px">共 5 条</div>
<div class="a" style="left:2567px;top:1575px;width:198px;height:55px;border:2px solid #dcdfe6;border-radius:6px"></div>
<div class="t " style="left:2605px;top:1591px;font-size:24px;color:#606266">30条/页</div>
<svg class="a" style="left:2735px;top:1597px" width="18" height="11" viewBox="0 0 18 11"><polyline points="1,1 9,9 17,1" fill="none" stroke="#c0c4cc" stroke-width="2"/></svg>
<svg class="a" style="left:2812px;top:1593px" width="12" height="20" viewBox="0 0 12 20"><polyline points="11,1 2,10 11,19" fill="none" stroke="#c0c4cc" stroke-width="2"/></svg>
<div class="a" style="left:2885px;top:1578px;width:52px;height:52px;background:#e1522d;border-radius:6px"></div>
<div class="t " style="left:2904px;top:1591px;font-size:26px;color:#fff">1</div>
<svg class="a" style="left:2970px;top:1593px" width="12" height="20" viewBox="0 0 12 20"><polyline points="1,1 10,10 1,19" fill="none" stroke="#c0c4cc" stroke-width="2"/></svg>
<div class="t " style="left:3061px;top:1591px;font-size:24px;color:#606266">前往</div>
<div class="a" style="left:3128px;top:1575px;width:90px;height:55px;border:2px solid #dcdfe6;border-radius:6px"></div>
<div class="t " style="left:3163px;top:1591px;font-size:24px;color:#606266">1</div>
<div class="t " style="left:3236px;top:1591px;font-size:24px;color:#606266">页</div>
<div class="t " style="left:2553px;top:1510px;font-size:84px;color:#000;-webkit-text-stroke:1.5px #000">头条</div>
<div class="t " style="left:2557px;top:1506px;font-size:84px;color:#fff">头条</div>
<div class="t " style="left:2744px;top:1516px;font-size:88px;letter-spacing:3px;color:#000;-webkit-text-stroke:1.5px #000">@Echa</div>
<div class="t " style="left:2748px;top:1512px;font-size:88px;letter-spacing:3px;color:#fff">@Echa</div>
<div class="t " style="left:3052px;top:1513px;font-size:84px;color:#000;-webkit-text-stroke:1.5px #000">攻城狮</div>
<div class="t " style="left:3056px;top:1509px;font-size:84px;color:#fff">攻城狮</div>
<div class="a" style="left:0px;top:1570px;width:3356px;height:80px;background:linear-gradient(to bottom,rgba(0,0,0,0),rgba(0,0,0,.035));pointer-events:none"></div>
</body></html>
